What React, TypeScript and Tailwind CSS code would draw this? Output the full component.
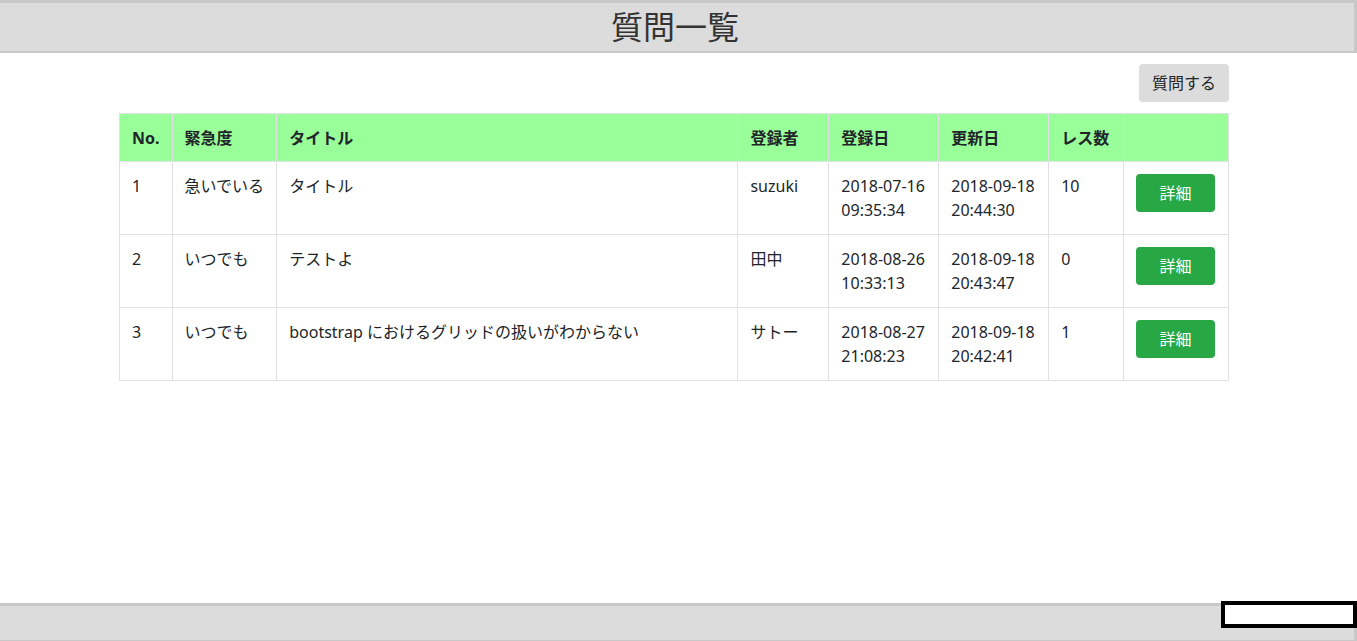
import React from 'react';

interface Question {
  no: number;
  urgency: string;
  title: string;
  author: string;
  created: [string, string];
  updated: [string, string];
  replies: number;
}

const questions: Question[] = [
  { no: 1, urgency: '急いでいる', title: 'タイトル', author: 'suzuki', created: ['2018-07-16', '09:35:34'], updated: ['2018-09-18', '20:44:30'], replies: 10 },
  { no: 2, urgency: 'いつでも', title: 'テストよ', author: '田中', created: ['2018-08-26', '10:33:13'], updated: ['2018-09-18', '20:43:47'], replies: 0 },
  { no: 3, urgency: 'いつでも', title: 'bootstrap におけるグリッドの扱いがわからない', author: 'サトー', created: ['2018-08-27', '21:08:23'], updated: ['2018-09-18', '20:42:41'], replies: 1 },
];

const font = "font-['Noto_Sans','Noto_Sans_CJK_JP',sans-serif]";

const App: React.FC = () => {
  return (
    <div className={`h-screen flex flex-col bg-white text-[#212529] ${font}`}>
      {/* Page header */}
      <header className="h-[53px] shrink-0 bg-[#dcdcdc] border-t-[3px] border-b-[2px] border-r-[3px] border-[#c8c8c8] flex items-center justify-center pr-[4px]">
        <h1 className="text-[32px] leading-none text-[#333]">質問一覧</h1>
      </header>

      {/* Content */}
      <main className="w-[1110px] ml-[119px]">
        <div className="flex justify-end pt-[11px] pb-[11px]">
          <button className="w-[90px] h-[38px] rounded bg-[#dcdcdc] text-[16px] leading-6 text-[#212529]">質問する</button>
        </div>
        <table className="w-full border-collapse text-[16px] leading-6">
          <colgroup>
            <col className="w-[51px]" />
            <col className="w-[105px]" />
            <col className="w-[463px]" />
            <col className="w-[91px]" />
            <col className="w-[110px]" />
            <col className="w-[110px]" />
            <col className="w-[75px]" />
            <col className="w-[105px]" />
          </colgroup>
          <thead>
            <tr className="bg-[#99ff99] text-left">
              {['No.', '緊急度', 'タイトル', '登録者', '登録日', '更新日', 'レス数', ''].map((h, i) => (
                <th key={i} className="border border-[#dee2e6] px-3 py-0 h-[48px] font-bold align-middle">{h}</th>
              ))}
            </tr>
          </thead>
          <tbody>
            {questions.map(q => (
              <tr key={q.no} className="align-top">
                <td className="border border-[#dee2e6] p-3 h-[73px]">{q.no}</td>
                <td className="border border-[#dee2e6] p-3">{q.urgency}</td>
                <td className="border border-[#dee2e6] p-3">{q.title}</td>
                <td className="border border-[#dee2e6] p-3">{q.author}</td>
                <td className="border border-[#dee2e6] p-3">{q.created[0]}<br />{q.created[1]}</td>
                <td className="border border-[#dee2e6] p-3">{q.updated[0]}<br />{q.updated[1]}</td>
                <td className="border border-[#dee2e6] p-3">{q.replies}</td>
                <td className="border border-[#dee2e6] p-3">
                  <button className="w-[79px] h-[38px] rounded bg-[#28a745] text-white text-[16px] leading-6">詳細</button>
                </td>
              </tr>
            ))}
          </tbody>
        </table>
      </main>

      {/* Footer */}
      <footer className="mt-auto relative h-[38px] shrink-0 bg-[#dcdcdc] border-t-[3px] border-b border-r-[3px] border-[#c8c8c8]">
        <div className="absolute right-[-3px] top-[-5px] w-[136px] h-[27px] border-[4px] border-black bg-white" />
      </footer>
    </div>
  );
};

export default App;
